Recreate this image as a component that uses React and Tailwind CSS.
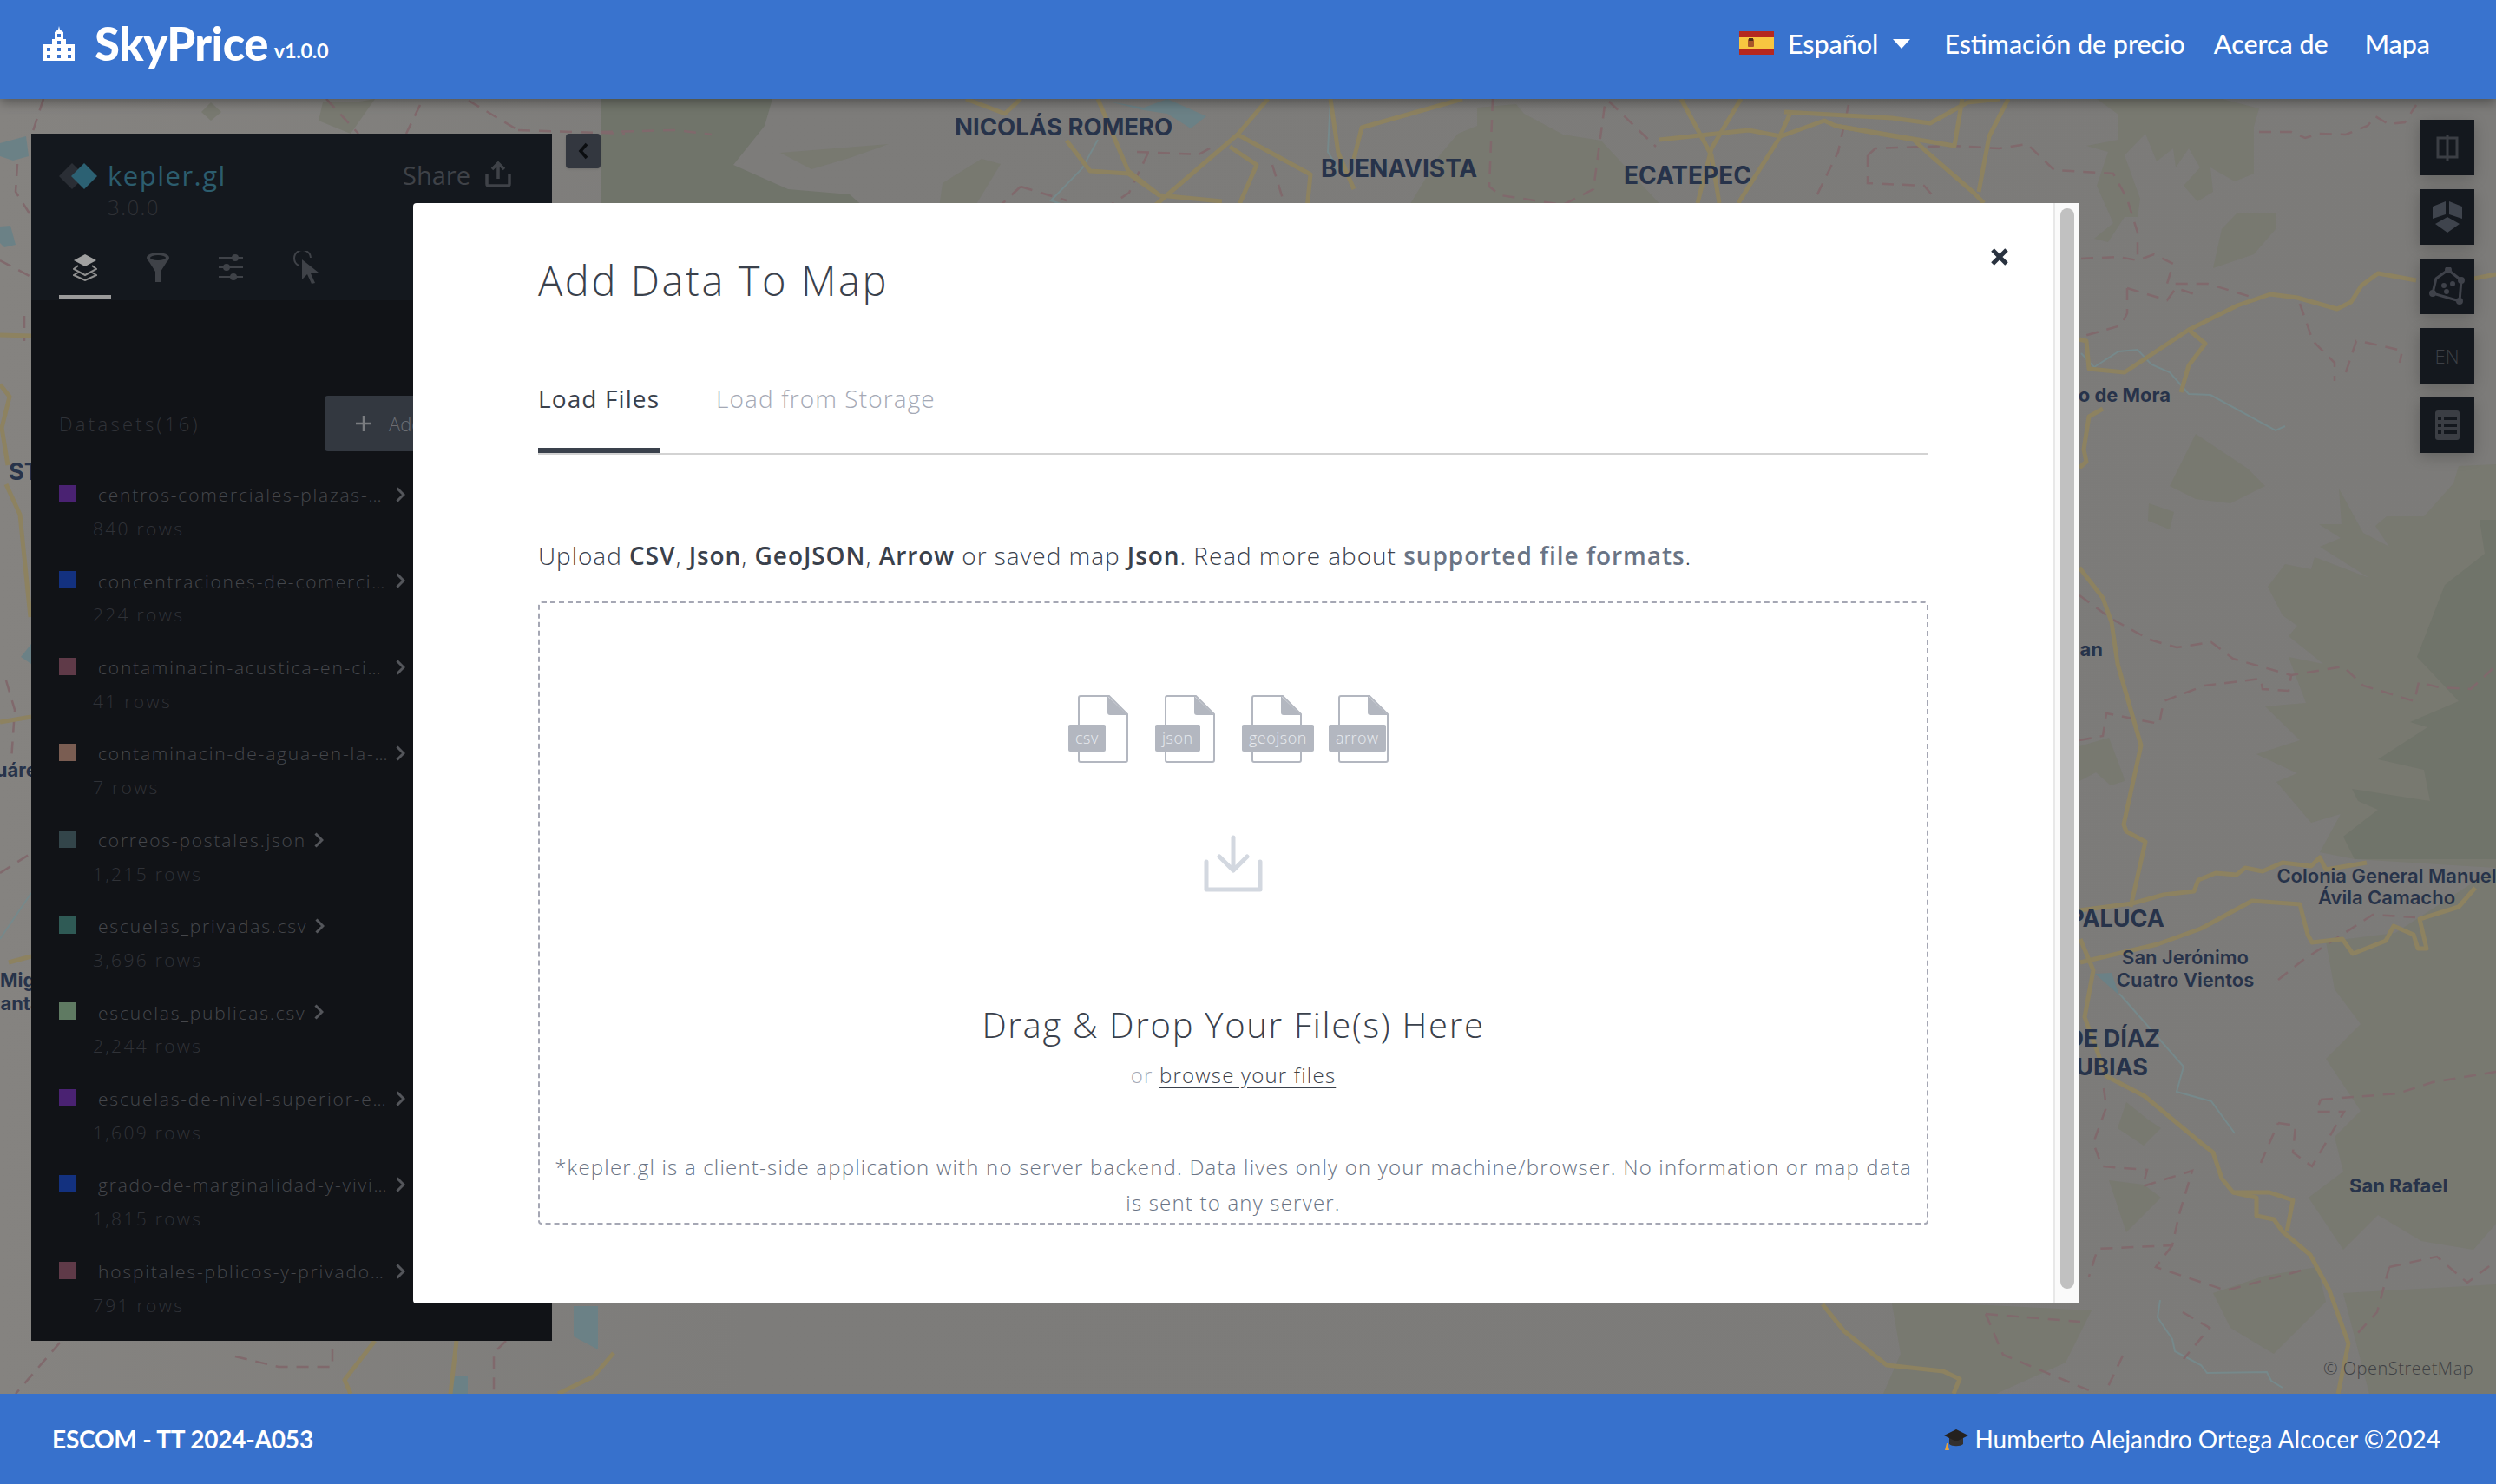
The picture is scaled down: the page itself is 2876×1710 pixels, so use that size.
import React from "react";

const roads = [
  "1912,161 2015,150 2052,157 2102,139 2115,145 2205,161 2220,175 2273,221 2286,234",
  "2056,129 2180,136 2224,142 2267,118 2304,114",
  "1937,114 1972,179 1981,234",
  "2006,114 1972,171 1956,234",
  "2062,132 2049,161 2003,234",
  "2314,114 2292,157 2280,221",
  "2261,114 2252,168 2115,145",
  "1265,114 1300,197 1336,225 1408,232",
  "1461,114 1426,155 1327,240",
  "1426,155 1510,201 1506,240",
  "1533,114 1542,176 1560,218",
  "1685,114 1569,147 1560,183",
  "1417,169 1448,190 1426,240",
  "1113,114 1158,131 1176,114",
  "1229,162 1256,197 1300,200 1336,225",
  "2851,321 2876,316",
  "2784,323 2740,315 2721,329 2709,348 2693,356 2647,343 2616,339 2578,352 2522,380 2448,429 2407,425 2404,393 2396,391",
  "2522,380 2541,396 2522,421 2513,452",
  "2423,471 2407,480 2401,518 2404,532 2396,539",
  "2396,654 2423,689 2433,717 2440,765 2467,859 2447,950 2450,958 2472,970 2455,1045",
  "2396,1049 2457,1041 2493,1031 2528,1027 2533,1014 2553,1006 2577,1008 2587,1000 2607,1004 2630,994 2663,998 2673,988 2680,1002 2727,994",
  "2397,1109 2486,1088 2536,1070 2595,1038 2650,1042 2659,1077 2664,1086 2699,1082 2711,1099 2749,1084 2758,1067 2781,1077 2786,1093 2796,1093 2788,1059 2833,1045 2852,1023",
  "2397,1082 2412,1118 2402,1172 2427,1240 2471,1263 2536,1317 2550,1328 2560,1358 2573,1374 2600,1380 2600,1401 2620,1405 2630,1419 2662,1446 2684,1487 2706,1548 2694,1606",
  "2573,1374 2615,1374 2642,1383 2635,1419",
  "2100,1503 2125,1534 2174,1573 2239,1580 2258,1589 2251,1606",
  "432,1545 397,1590 404,1606",
  "526,1545 519,1606",
  "707,1559 684,1586 643,1606",
  "7,558 23,593 35,711",
  "0,832 36,826",
  "10,1109 36,1102",
  "0,443 11,457 2,493 9,536",
  "0,386 36,387",
];

const trails = [
  "2603,152 2640,152 2656,159 2672,154 2703,155 2728,145 2737,134 2752,143 2771,141 2784,121",
  "2152,179 2161,171 2248,168 2304,171 2336,166 2367,196 2435,200 2451,229 2463,268 2463,298",
  "2152,179 2152,211 2217,214 2230,229",
  "2130,121 2118,175 2090,232",
  "2398,298 2441,296 2463,300 2482,293 2504,304 2497,327 2544,327 2597,343",
  "2451,332 2497,346 2507,332 2529,339",
  "2451,332 2451,361 2444,375 2398,388",
  "2650,350 2665,393 2690,418 2690,439",
  "2703,429 2715,393 2728,395 2768,404 2765,418",
  "2396,686 2433,713 2477,737 2508,746 2548,740 2573,759 2640,778 2700,768 2723,790 2782,808 2787,786 2810,792 2847,794 2876,767",
  "2396,853 2423,848 2427,822 2488,834 2493,808 2540,790 2605,782 2607,794 2637,796 2640,778",
  "2625,1129 2654,1106 2734,1054 2783,1057",
  "2424,1254 2427,1276 2412,1317 2422,1344 2474,1348 2469,1367 2526,1349 2511,1399 2503,1435 2417,1439 2407,1471",
  "2503,1435 2484,1460 2565,1487 2659,1462",
  "2674,1267 2763,1260 2803,1247 2876,1235",
  "2625,1294 2645,1297 2642,1328 2664,1344 2701,1281 2669,1281 2674,1267",
  "2605,1340 2625,1294",
  "2753,1460 2739,1512 2714,1539",
  "2753,1460 2808,1448 2843,1478 2876,1453",
  "2515,1512 2546,1530 2516,1566",
  "2288,1514 2397,1523",
  "2288,1514 2308,1561 2407,1602",
  "2446,1562 2427,1602",
  "69,1547 18,1606",
  "271,1563 321,1575 383,1575 383,1545",
  "583,1545 569,1559 569,1606",
  "7,784 17,818 13,876",
  "0,1006 33,985",
  "50,114 37,154",
  "20,189 18,221 34,246",
  "0,300 34,318",
  "28,364 28,393",
  "597,150 720,154",
  "540,116 597,150",
  "376,114 413,154",
  "484,121 468,154",
  "692,152 780,150 820,155",
  "1310,175 1381,178 1403,166",
  "1323,176 1301,222 1274,240",
  "1720,114 1716,215 1729,225 1801,236 1836,218 1850,114",
  "1854,117 1908,169",
  "1176,215 1149,240",
  "1176,215 1229,231",
  "1466,190 1479,232",
];

const rivers = [
  "2398,407 2413,423 2441,405 2463,403 2479,420 2500,429 2522,454 2547,455 2622,496 2633,491",
  "2442,1145 2516,1229 2508,1258 2548,1269 2575,1306",
  "2489,1498 2486,1518 2503,1543 2506,1557 2536,1573 2543,1582 2612,1581 2617,1591 2630,1599",
  "0,1082 36,1029",
  "1533,114 1530,175 1545,200",
  "1265,161 1247,194 1211,231 1225,236",
];

const woods = [
  "899,176 1024,166 979,182 935,195",
  "1131,183 1153,189 1122,240 1082,240 1086,211",
  "1680,154 1702,145 1702,124 1747,120 1756,131 1801,155 1845,162 1917,240 1622,240 1658,180",
  "2416,114 2441,132 2441,161 2404,168 2429,175 2416,214 2435,257 2413,275 2429,279 2448,250 2463,250 2466,229 2448,179 2472,154 2485,186 2504,171 2507,193 2522,171 2535,193 2516,214 2532,232 2550,221 2547,193 2575,209 2597,200 2597,146 2603,125 2560,114",
  "2560,264 2578,245 2622,245 2622,264 2597,293 2550,309",
  "2613,676 2633,650 2663,656 2667,642 2730,666 2673,630 2697,620 2672,604 2698,604 2695,563 2723,614 2753,630 2737,606 2750,595 2793,595 2827,557 2833,537 2876,535 2876,1000 2713,990 2673,982 2697,938 2663,948 2623,901 2647,891 2600,869 2650,853 2610,814 2657,810 2637,757 2677,765 2637,733 2647,721 2630,709",
  "2530,500 2590,540 2610,560 2570,580 2530,575 2500,560",
  "2476,580 2505,590 2500,610 2475,600",
  "2396,860 2430,850 2447,895 2448,900 2432,905 2415,890 2396,900",
  "2680,1085 2760,1075 2876,1000 2876,1410 2850,1440 2790,1430 2740,1400 2700,1440 2660,1380 2700,1350 2690,1310 2720,1280 2680,1220 2720,1180 2690,1140",
  "2450,1270 2475,1290 2490,1300 2470,1320 2440,1300",
  "2430,1360 2470,1365 2490,1380 2450,1420",
  "2550,1490 2610,1470 2670,1460 2680,1500 2620,1560 2570,1530",
  "2180,1502 2250,1502 2410,1510 2380,1570 2300,1606 2170,1606 2190,1560",
  "2700,1490 2876,1480 2876,1606 2730,1606",
  "372,118 409,118 432,114 404,154 367,139",
  "243,118 255,129 243,139 232,129",
];

const forestCore = [
  "2876,599 2857,599 2863,638 2817,674 2785,757 2833,808 2777,832 2797,838 2740,875 2793,887 2800,923 2710,909 2717,923 2740,933 2700,964 2713,990 2876,990",
  "692,114 890,114 881,145 845,190 908,218 979,224 997,240 692,240",
];

const waterPatches = [
  "2414,1122 2433,1121 2442,1147",
  "661,1505 689,1505 689,1555 661,1540",
  "523,1586 539,1586 539,1606 519,1606",
  "24,757 36,742 36,765",
  "0,165 30,157 33,180 15,185 0,180",
  "0,261 12,260 18,282 5,285 0,280",
  "1278,117 1318,124 1345,114 1390,134 1372,148 1345,131 1318,127",
];

const datasets = [
  { name: "centros-comerciales-plazas-y-mercados.csv", rows: "840 rows", color: "bg-[#4a2272]" },
  { name: "concentraciones-de-comercio-informal.csv", rows: "224 rows", color: "bg-[#13317f]" },
  { name: "contaminacin-acustica-en-ciudad.csv", rows: "41 rows", color: "bg-[#5f3a48]" },
  { name: "contaminacin-de-agua-en-la-ciudad.csv", rows: "7 rows", color: "bg-[#7a5d52]" },
  { name: "correos-postales.json", rows: "1,215 rows", color: "bg-[#33454a]" },
  { name: "escuelas_privadas.csv", rows: "3,696 rows", color: "bg-[#2f5a55]" },
  { name: "escuelas_publicas.csv", rows: "2,244 rows", color: "bg-[#5f7a62]" },
  { name: "escuelas-de-nivel-superior-en-ciudad.csv", rows: "1,609 rows", color: "bg-[#4a2272]" },
  { name: "grado-de-marginalidad-y-vivienda.csv", rows: "1,815 rows", color: "bg-[#13317f]" },
  { name: "hospitales-pblicos-y-privados-ciudad.csv", rows: "791 rows", color: "bg-[#5f3a48]" },
];

const mapLabels = [
  { text: "NICOLÁS ROMERO", cls: "left-[1100px] top-[33px] text-[27.5px]" },
  { text: "BUENAVISTA", cls: "left-[1522px] top-[80px] text-[28px]" },
  { text: "ECATEPEC", cls: "left-[1871px] top-[88px] text-[28px]" },
  { text: "Texcoco de Mora", cls: "right-[375px] top-[341px] text-[22px]" },
  { text: "Chicoloapan", cls: "right-[453px] top-[634px] text-[22px]" },
  { text: "IXTAPALUCA", cls: "right-[382px] top-[944px] text-[27px]" },
  { text: "CHALCO DE DÍAZ", cls: "right-[387px] top-[1082px] text-[27px]" },
  { text: "COVARRUBIAS", cls: "right-[401px] top-[1115px] text-[27px]" },
  { text: "San Rafael", cls: "left-[2707px] top-[1252px] text-[22px]" },
  { text: "ST", cls: "left-[10px] top-[429px] text-[27px]" },
  { text: "Juárez", cls: "-left-[18px] top-[773px] text-[22px]" },
  { text: "Miguel", cls: "left-0 top-[1015px] text-[22px]" },
  { text: "Santa", cls: "-left-[14px] top-[1042px] text-[22px]" },
];

function MapLayer() {
  return (
    <>
      <svg className="absolute inset-0 h-full w-full" viewBox="0 114 2876 1492" preserveAspectRatio="none">
        <defs>
          <linearGradient id="ground" x1="0" y1="0" x2="1" y2="0">
            <stop offset="0" stopColor="#858380" />
            <stop offset="0.3" stopColor="#7d7c7a" />
            <stop offset="1" stopColor="#7c7b79" />
          </linearGradient>
        </defs>
        <rect x="0" y="114" width="2876" height="1492" fill="url(#ground)" />
        {woods.map((p) => (
          <polygon key={p} points={p} fill="#787970" />
        ))}
        {forestCore.map((p) => (
          <polygon key={p} points={p} fill="#70746a" />
        ))}
        {waterPatches.map((p) => (
          <polygon key={p} points={p} fill="#6b8186" />
        ))}
        {rivers.map((p) => (
          <polyline key={p} points={p} fill="none" stroke="#76898b" strokeWidth="2" />
        ))}
        {trails.map((p) => (
          <polyline key={p} points={p} fill="none" stroke="#80696c" strokeWidth="2.5" strokeDasharray="14 10" />
        ))}
        {roads.map((p) => (
          <polyline key={p} points={p} fill="none" stroke="#8d8260" strokeWidth="5" strokeLinejoin="round" />
        ))}
      </svg>
      {mapLabels.map((l) => (
        <span
          key={l.text}
          className={`absolute -translate-y-1/2 whitespace-nowrap font-['Inter',sans-serif] font-bold leading-none text-[#27334a] ${l.cls}`}
        >
          {l.text}
        </span>
      ))}
      <div className="absolute left-[2418px] top-[976px] w-[200px] text-center font-['Inter',sans-serif] text-[22px] font-semibold leading-[26px] text-[#27334a]">
        San Jerónimo
        <br />
        Cuatro Vientos
      </div>
      <div className="absolute left-[2600px] top-[883px] w-[300px] text-center font-['Inter',sans-serif] text-[22px] font-semibold leading-[25px] text-[#27334a]">
        Colonia General Manuel
        <br />
        Ávila Camacho
      </div>
      <span className="absolute left-[2677px] top-[1451px] font-['Open_Sans',sans-serif] text-[20px] font-light leading-6 tracking-[0.5px] text-[#3f4145]">
        © OpenStreetMap
      </span>
    </>
  );
}

function Header() {
  return (
    <header className="relative z-20 flex h-[114px] shrink-0 items-start justify-between bg-[#3973ce] pl-[50px] pr-[76px] font-['Lato',sans-serif] text-white shadow-[0_4px_12px_rgba(0,0,0,0.35)]">
      <div className="flex items-center pt-[22px]">
        <svg width="36" height="40" viewBox="0 0 36 40" fill="#fff">
          <path d="M18 0l1 4 4 3v8h3v6h10v19H0V21h10v-6h3V7l4-3z" />
          <g fill="#3973ce">
            <rect x="16" y="9" width="4" height="4" />
            <rect x="4" y="25" width="4" height="4" />
            <rect x="4" y="33" width="4" height="4" />
            <rect x="16" y="17" width="4" height="4" />
            <rect x="16" y="25" width="4" height="4" />
            <rect x="16" y="33" width="4" height="4" />
            <rect x="28" y="25" width="4" height="4" />
            <rect x="28" y="33" width="4" height="4" />
          </g>
        </svg>
        <span className="ml-[23px] text-[52.5px] font-black leading-[56px] tracking-[-0.5px]">SkyPrice</span>
        <span className="ml-[7px] mt-[16px] text-[23.5px] font-bold leading-7 tracking-[-0.3px]">v1.0.0</span>
      </div>
      <nav className="flex h-[100px] items-center text-[30.4px] font-medium leading-8">
        <svg width="40" height="27" viewBox="0 0 40 27" className="-mt-[1px]">
          <rect width="40" height="27" fill="#b5281f" />
          <rect y="7" width="40" height="13" fill="#f8c640" />
          <rect x="10" y="9" width="7" height="9" rx="1" fill="#a8552a" />
          <rect x="11" y="8" width="5" height="3" fill="#4a2d1a" />
        </svg>
        <span className="ml-[16px]">Español</span>
        <svg width="20" height="11" viewBox="0 0 20 11" className="ml-[17px]" fill="#fff">
          <path d="M0 0h20L10 11z" />
        </svg>
        <span className="ml-[39px]">Estimación de precio</span>
        <span className="ml-[33px]">Acerca de</span>
        <span className="ml-[42px]">Mapa</span>
      </nav>
    </header>
  );
}

function Footer() {
  return (
    <footer className="relative z-20 flex h-[104px] shrink-0 items-center justify-between bg-[#3771cc] pl-[60px] pr-[64px] font-['Lato',sans-serif] text-white">
      <span className="text-[28px] font-bold tracking-[-0.2px]">ESCOM - TT 2024-A053</span>
      <span className="flex items-center text-[28px]">
        <svg width="28" height="30" viewBox="0 0 28 30" className="mr-[7px]">
          <path d="M6 14v7c3 3 13 3 16 0v-7z" fill="#33302e" />
          <path d="M14 4L0 11l14 7 14-7z" fill="#24211f" />
          <path d="M3 12l1 8h-1l-2 8h5l-2-8z" fill="#e8a33d" />
        </svg>
        Humberto Alejandro Ortega Alcocer ©2024
      </span>
    </footer>
  );
}

function SidebarTabs() {
  return (
    <div className="flex h-14 items-start">
      <div className="flex h-14 w-[60px] flex-col items-center border-b-4 border-[#9a9a9a] pt-[4px]">
        <svg width="28" height="32" viewBox="0 0 28 32" fill="none" stroke="#8f8f8f" strokeWidth="2">
          <path d="M14 1l13 7-13 7L1 8z" fill="#a0a0a0" stroke="none" />
          <path d="M6 14l-5 4 13 7 13-7-5-4" />
          <path d="M6 22l-5 3 13 6 13-6-5-3" />
        </svg>
      </div>
      <svg width="28" height="34" viewBox="0 0 28 34" className="ml-[40px] mt-[3px]" fill="#3f4248">
        <path d="M1 6a13 6 0 0 1 26 0c0 2-2 4-3 5l-7 11v12h-6V22L4 11C3 10 1 8 1 6z" />
        <ellipse cx="14" cy="6" rx="9" ry="3" fill="#14181e" />
      </svg>
      <svg width="28" height="30" viewBox="0 0 28 30" className="ml-[56px] mt-[5px]" stroke="#3f4248" strokeWidth="2" fill="#3f4248">
        <path d="M0 4h28M0 15h28M0 26h28" />
        <circle cx="19" cy="4" r="3" />
        <circle cx="9" cy="15" r="3" />
        <circle cx="17" cy="26" r="3" />
      </svg>
      <svg width="30" height="38" viewBox="0 0 30 38" className="ml-[58px] mt-[1px]" fill="#3f4248">
        <path d="M6 17A9.5 9.5 0 1 1 20 8" fill="none" stroke="#3f4248" strokeWidth="2" />
        <path d="M10 10l19 15-9 1 5 11-4 1-5-11-6 6z" />
      </svg>
    </div>
  );
}

function DatasetRow({ item }) {
  return (
    <div className="h-[99.4px]">
      <div className="flex h-8 items-center">
        <div className={`-mt-1 h-5 w-5 shrink-0 ${item.color}`} />
        <span className="ml-[25px] max-w-[334px] truncate text-[21px] font-light tracking-[1.8px] text-[#45474c]">
          {item.name}
        </span>
        <svg width="11" height="18" viewBox="0 0 11 18" className="ml-[9px] -mt-[2px] shrink-0" fill="none" stroke="#54565b" strokeWidth="3">
          <path d="M1.5 1.5L9 9l-7.5 7.5" />
        </svg>
      </div>
      <div className="mt-[6px] pl-[39px] text-[21px] font-light leading-8 tracking-[2.3px] text-[#303237]">
        {item.rows}
      </div>
    </div>
  );
}

function Sidebar() {
  return (
    <aside className="absolute left-9 top-[40px] z-10 h-[1391px] w-[600px] overflow-hidden bg-[#111317] font-['Open_Sans',sans-serif]">
      <div className="h-[192px] bg-[#14181e] pl-[32px] pr-[47px]">
        <div className="flex items-start justify-between pt-[28px]">
          <div className="flex">
            <svg width="44" height="30" viewBox="0 0 44 30" className="mt-[6px]">
              <path d="M15 0l15 15-15 15L0 15z" fill="#2a2e35" />
              <path d="M29 0l15 15-15 15-15-15z" fill="#2c6173" />
            </svg>
            <div className="ml-[12px]">
              <div className="text-[31px] font-medium leading-10 tracking-[1.5px] text-[#2c5d6e]">kepler.gl</div>
              <div className="mt-[3px] text-[24px] font-light leading-7 tracking-[1.5px] text-[#2f3136]">3.0.0</div>
            </div>
          </div>
          <div className="flex items-center">
            <span className="text-[29px] leading-10 text-[#3f4248]">Share</span>
            <svg width="30" height="30" viewBox="0 0 30 30" className="ml-[17px] -mt-[3px]" fill="none" stroke="#3f4248" strokeWidth="3.5">
              <path d="M15 20V2M8 9l7-7 7 7M2 15v11a2 2 0 0 0 2 2h22a2 2 0 0 0 2-2V15" />
            </svg>
          </div>
        </div>
        <div className="mt-[35px]">
          <SidebarTabs />
        </div>
      </div>
      <div className="px-[32px]">
        <div className="mt-[110px] flex h-16 items-center justify-between">
          <span className="text-[22px] font-light tracking-[3.3px] text-[#303237]">Datasets(16)</span>
          <div className="flex h-16 w-[230px] items-center rounded bg-[#333840] pl-[36px] text-[22px] text-[#6b6e74]">
            <svg width="18" height="18" viewBox="0 0 18 18" stroke="#7a7c80" strokeWidth="2.5">
              <path d="M9 0v18M0 9h18" />
            </svg>
            <span className="ml-[20px] whitespace-nowrap font-light">Add Data</span>
          </div>
        </div>
        <div className="mt-[35px]">
          {datasets.map((d) => (
            <DatasetRow key={d.name} item={d} />
          ))}
        </div>
      </div>
    </aside>
  );
}

function SideButtons() {
  const boxes = [
    <svg key="split" width="26" height="30" viewBox="0 0 26 30" fill="none" stroke="#3b3e44" strokeWidth="3">
      <path d="M2 4h22v22H2zM13 0v30" />
    </svg>,
    <svg key="cube" width="34" height="36" viewBox="0 0 34 36" fill="#3f444d">
      <path d="M15 0v15L0 20V6zM19 0l15 6v14l-15-5zM17 18l14 8-14 10-14-10z" />
    </svg>,
    <svg key="draw" width="44" height="44" viewBox="0 0 44 44" fill="none" stroke="#3f424a" strokeWidth="3">
      <path d="M23 3L38 15l-2 24L5 30 9 13z" />
      <circle cx="23" cy="3" r="2.5" fill="#3f424a" />
      <circle cx="38" cy="15" r="2.5" fill="#3f424a" />
      <circle cx="36" cy="39" r="2.5" fill="#3f424a" />
      <circle cx="5" cy="30" r="2.5" fill="#3f424a" />
      <circle cx="18" cy="21" r="1.5" fill="#3f424a" />
      <circle cx="28" cy="19" r="1.5" fill="#3f424a" />
      <circle cx="21" cy="28" r="1.5" fill="#3f424a" />
    </svg>,
    <span key="en" className="font-['Open_Sans',sans-serif] text-[22px] font-light text-[#3d4046]">EN</span>,
    <svg key="table" width="28" height="34" viewBox="0 0 28 34" fill="#3b3e44">
      <path d="M3 0h22a3 3 0 0 1 3 3v28a3 3 0 0 1-3 3H3a3 3 0 0 1-3-3V3a3 3 0 0 1 3-3z" />
      <g fill="#14181e">
        <rect x="3" y="7" width="4" height="4" />
        <rect x="10" y="7" width="15" height="4" />
        <rect x="3" y="15" width="4" height="4" />
        <rect x="10" y="15" width="15" height="4" />
        <rect x="3" y="23" width="4" height="4" />
        <rect x="10" y="23" width="15" height="4" />
      </g>
    </svg>,
  ];
  return (
    <div className="absolute left-[2788px] top-[24px] z-10 flex flex-col gap-4">
      {boxes.map((b) => (
        <div key={b.key} className="flex h-16 w-[63px] items-center justify-center bg-[#14181e] shadow-[0_4px_16px_rgba(0,0,0,0.2)]">
          {b}
        </div>
      ))}
    </div>
  );
}

function FileIcon({ label, width }) {
  return (
    <div className={`relative h-[78px] ${width}`}>
      <svg width="58" height="78" viewBox="0 0 58 78" className="absolute left-[11px] top-0" fill="none">
        <path d="M3 1h33l21 21v53a2 2 0 0 1-2 2H3a2 2 0 0 1-2-2V3a2 2 0 0 1 2-2z" stroke="#b3b7c0" strokeWidth="2" />
        <path d="M34 1l23 22H37a3 3 0 0 1-3-3z" fill="#b3b7c0" />
      </svg>
      <span className="absolute left-0 top-[34px] flex h-[31px] items-center rounded-[2px] bg-[#b3b7c0] px-2 pb-[1px] font-['Open_Sans',sans-serif] text-[18px] font-light leading-none tracking-[0.5px] text-[#e8ebef]">
        {label}
      </span>
    </div>
  );
}

function Modal() {
  return (
    <section className="absolute left-[476px] top-[120px] z-10 flex h-[1268px] w-[1920px] rounded-l bg-white font-['Open_Sans',sans-serif]">
      <div className="relative w-[1890px] pl-[144px] pr-[144px] pt-[58px]">
        <svg width="20" height="20" viewBox="0 0 20 20" className="absolute right-[52px] top-[52px]" stroke="#29323f" strokeWidth="5">
          <path d="M2 2l16 16M18 2L2 18" />
        </svg>
        <h2 className="text-[47px] font-light leading-[62px] tracking-[2.6px] text-[#3a414c]">Add Data To Map</h2>
        <div className="mt-[72px] flex h-[98px] border-b-2 border-[#d3d3d3] text-[28px] leading-[66px] tracking-[1.1px]">
          <div className="h-[96px] border-b-[6px] border-[#3a414c] font-normal text-[#3a414c]">Load Files</div>
          <div className="ml-[65px] font-light text-[#a5a9b5]">Load from Storage</div>
        </div>
        <p className="mt-[96px] text-[28px] font-light leading-10 tracking-[0.95px] text-[#3a414c]">
          Upload <b className="font-semibold">CSV</b>, <b className="font-semibold">Json</b>, <b className="font-semibold">GeoJSON</b>,{" "}
          <b className="font-semibold">Arrow</b> or saved map <b className="font-semibold">Json</b>. Read more about{" "}
          <b className="font-semibold text-[#6a7485]">supported file formats</b>.
        </p>
        <div className="mt-[33px] flex h-[718px] flex-col items-center rounded border-2 border-dashed border-[#a5a7b4] pt-[106px]">
          <div className="ml-[609px] flex self-start">
            <FileIcon label="csv" width="w-[100px]" />
            <FileIcon label="json" width="w-[100px]" />
            <FileIcon label="geojson" width="w-[100px]" />
            <FileIcon label="arrow" width="w-[68px]" />
          </div>
          <svg width="68" height="66" viewBox="0 0 68 66" className="mt-[83px]" fill="none" stroke="#d3d8e0" strokeWidth="5" strokeLinecap="round" strokeLinejoin="round">
            <path d="M3 31v32h62V31M34 3v38M18 25l16 16 16-16" />
          </svg>
          <div className="mt-[128px] text-[40px] font-light leading-[50px] tracking-[1.7px] text-[#3a414c]">
            Drag &amp; Drop Your File(s) Here
          </div>
          <div className="mt-[18px] text-[24px] font-light leading-[30px] tracking-[1.2px] text-[#a5a9b5]">
            or <span className="text-[#3a414c] underline underline-offset-4">browse your files</span>
          </div>
          <p className="mt-[70px] w-[1570px] text-center text-[24px] font-light leading-[41px] tracking-[1.2px] text-[#6a7485]">
            *kepler.gl is a client-side application with no server backend. Data lives only on your machine/browser. No information or map data is sent to any server.
          </p>
        </div>
      </div>
      <div className="w-[30px] border-l-2 border-[#e8e8e8] bg-[#fafafa] pl-[6px] pt-[6px]">
        <div className="h-[1245px] w-4 rounded-lg bg-[#c1c1c1]" />
      </div>
    </section>
  );
}

export default function App() {
  return (
    <div className="flex h-[1710px] w-full flex-col overflow-hidden">
      <Header />
      <main className="relative flex-1 overflow-hidden">
        <MapLayer />
        <Sidebar />
        <div className="absolute left-[652px] top-[40px] z-10 flex h-10 w-10 items-center justify-center rounded-sm bg-[#33373f] shadow">
          <svg width="12" height="20" viewBox="0 0 12 20" fill="none" stroke="#0b0d10" strokeWidth="3.5">
            <path d="M10 2L3 10l7 8" />
          </svg>
        </div>
        <SideButtons />
        <Modal />
      </main>
      <Footer />
    </div>
  );
}
